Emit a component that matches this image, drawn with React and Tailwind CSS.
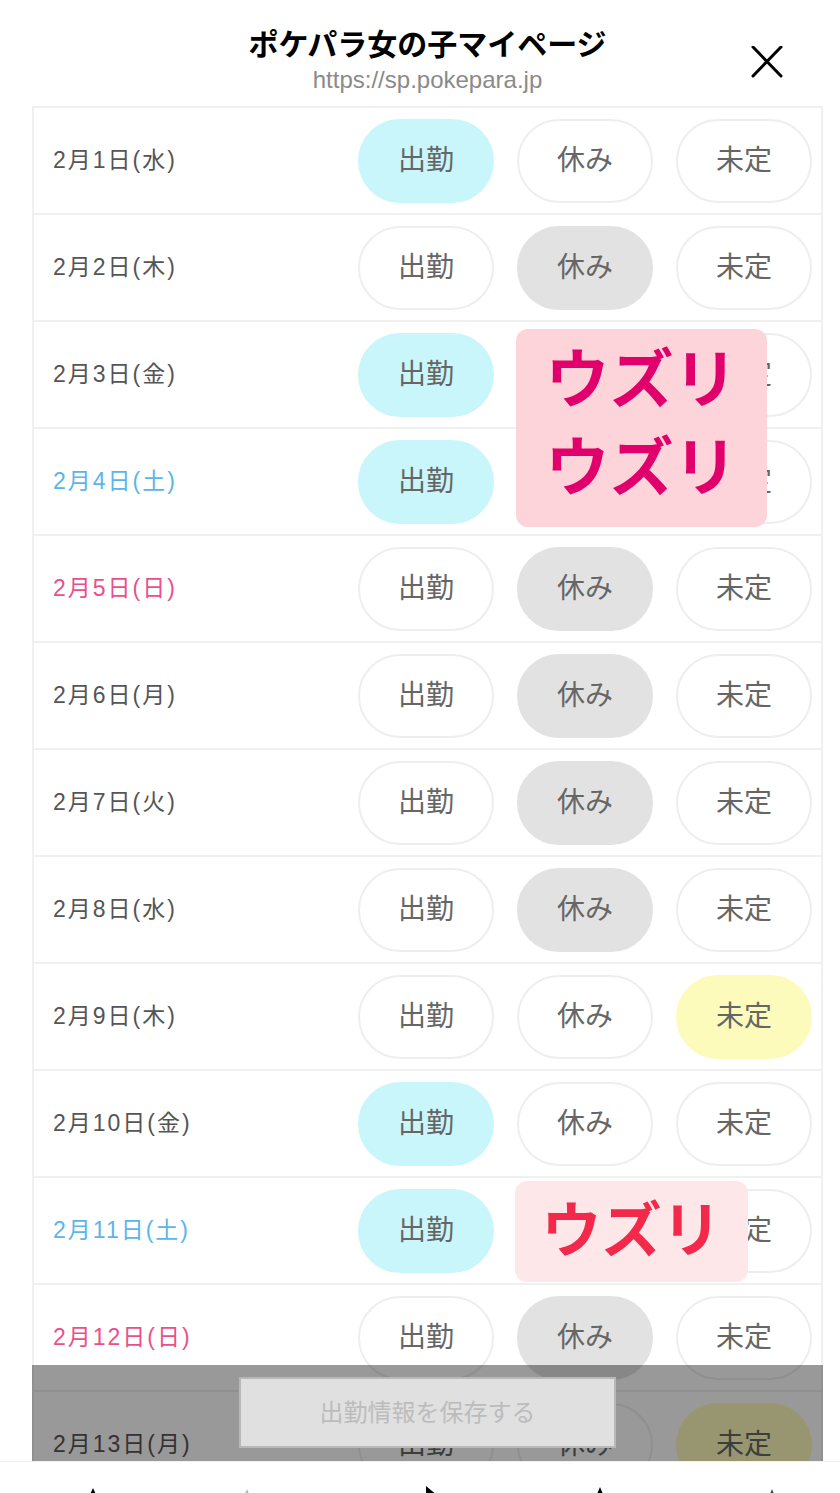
import React from "react";

const rows = [
  { d: "2月1日(水)", s: "work", c: "n" },
  { d: "2月2日(木)", s: "off", c: "n" },
  { d: "2月3日(金)", s: "work", c: "n" },
  { d: "2月4日(土)", s: "work", c: "sat" },
  { d: "2月5日(日)", s: "off", c: "sun" },
  { d: "2月6日(月)", s: "off", c: "n" },
  { d: "2月7日(火)", s: "off", c: "n" },
  { d: "2月8日(水)", s: "off", c: "n" },
  { d: "2月9日(木)", s: "tbd", c: "n" },
  { d: "2月10日(金)", s: "work", c: "n" },
  { d: "2月11日(土)", s: "work", c: "sat" },
  { d: "2月12日(日)", s: "off", c: "sun" },
  { d: "2月13日(月)", s: "tbd", c: "n" },
];

const font = { fontFamily: '"Liberation Sans", "Noto Sans CJK JP", sans-serif' };
const cjk = { fontFamily: '"Noto Sans CJK JP", sans-serif' };

function Pill({ label, active, tone }) {
  let cls = "bg-white border-[#eeeeee]";
  if (active) {
    if (tone === "work") cls = "bg-[#c9f6fb] border-[#c9f6fb]";
    else if (tone === "off") cls = "bg-[#e2e2e2] border-[#e2e2e2]";
    else cls = "bg-[#fdfbbb] border-[#fdfbbb]";
  }
  return (
    <div
      className={`flex h-[84px] w-[136px] items-center justify-center rounded-full border-2 pb-[5px] text-[28px] text-[#666666] ${cls}`}
      style={cjk}
    >
      {label}
    </div>
  );
}

function Row({ d, s, c }) {
  const color =
    c === "sat" ? "text-[#5cb5e8]" : c === "sun" ? "text-[#ea4f8c]" : "text-[#555555]";
  return (
    <div className="flex h-[107px] shrink-0 items-center border-b-2 border-[#f0f0f0] pl-[19px] pr-[9px]">
      <div className={`text-[23px] tracking-[2px] ${color}`}>{d}</div>
      <div className="ml-auto flex gap-[23px]">
        <Pill label="出勤" active={s === "work"} tone="work" />
        <Pill label="休み" active={s === "off"} tone="off" />
        <Pill label="未定" active={s === "tbd"} tone="tbd" />
      </div>
    </div>
  );
}

export default function App() {
  return (
    <div className="h-[1493px] w-[840px] overflow-hidden bg-white" style={font}>
      {/* header */}
      <div className="ml-[32px] grid h-[106px] w-[791px] grid-cols-[1fr_auto_1fr]">
        <div />
        <div className="flex flex-col items-center pt-[23px]">
          <div className="text-[30px] font-bold leading-[38px] text-black" style={cjk}>
            ポケパラ女の子マイページ
          </div>
          <div className="mt-[5px] text-[24px] leading-[28px] text-[#8a8a8a]">
            https://sp.pokepara.jp
          </div>
        </div>
        <div className="flex justify-end pr-[40px] pt-[46px]">
          <svg width="32" height="32" viewBox="0 0 32 32">
            <path d="M2 1 L30 30 M30 1 L2 30" stroke="#000" strokeWidth="3" strokeLinecap="round" />
          </svg>
        </div>
      </div>

      {/* content */}
      <div className="relative ml-[32px] h-[1355px] w-[791px] overflow-hidden">
        <div className="flex flex-col border-x-2 border-t-2 border-[#f0f0f0]">
          {rows.map((r) => (
            <Row key={r.d} {...r} />
          ))}
        </div>

        {/* sticker 1 */}
        <div
          className="absolute left-[484px] top-[223px] flex h-[198px] w-[251px] flex-col items-center rounded-[12px] bg-[#fdd4d9] pt-[1px] text-[64px] font-bold leading-[88px] text-[#e1006b]"
          style={cjk}
        >
          <div>ウズリ</div>
          <div>ウズリ</div>
        </div>

        {/* sticker 2 */}
        <div
          className="absolute left-[483px] top-[1075px] flex h-[101px] w-[233px] items-start justify-center rounded-[12px] bg-[#fde7e9] pt-[10px] text-[60px] font-bold leading-[70px] text-[#f2294b]"
          style={cjk}
        >
          ウズリ
        </div>

        {/* save overlay */}
        <div className="absolute bottom-0 left-0 right-0 flex h-[96px] justify-center bg-black/40 pt-[12px]">
          <div
            className="flex h-[71px] w-[377px] items-center justify-center border-2 border-[#b8b8b8] bg-[#e0e0e0] pb-[3px] text-[24px] text-[#bcbcbc]"
            style={cjk}
          >
            出勤情報を保存する
          </div>
        </div>
      </div>

      {/* toolbar */}
      <div className="flex h-[60px] border-t border-[#f2f2f2] pt-[23px]">
        <svg className="ml-[83px]" width="20" height="20" viewBox="0 0 20 20">
          <polygon points="10,3 15,14 5,14" fill="#000" />
        </svg>
        <svg className="ml-[134px]" width="20" height="20" viewBox="0 0 20 20">
          <polygon points="10,4 14,14 6,14" fill="#b5b5b5" />
        </svg>
        <svg className="ml-[163px]" width="20" height="20" viewBox="0 0 20 20">
          <polygon points="6,1 18,11 6,11" fill="#000" />
        </svg>
        <svg className="ml-[150px]" width="20" height="20" viewBox="0 0 20 20">
          <polygon points="10,2 15,14 5,14" fill="#000" />
        </svg>
        <svg className="ml-[152px]" width="20" height="20" viewBox="0 0 20 20">
          <polygon points="10,4 14,14 6,14" fill="#444" />
        </svg>
      </div>
    </div>
  );
}
